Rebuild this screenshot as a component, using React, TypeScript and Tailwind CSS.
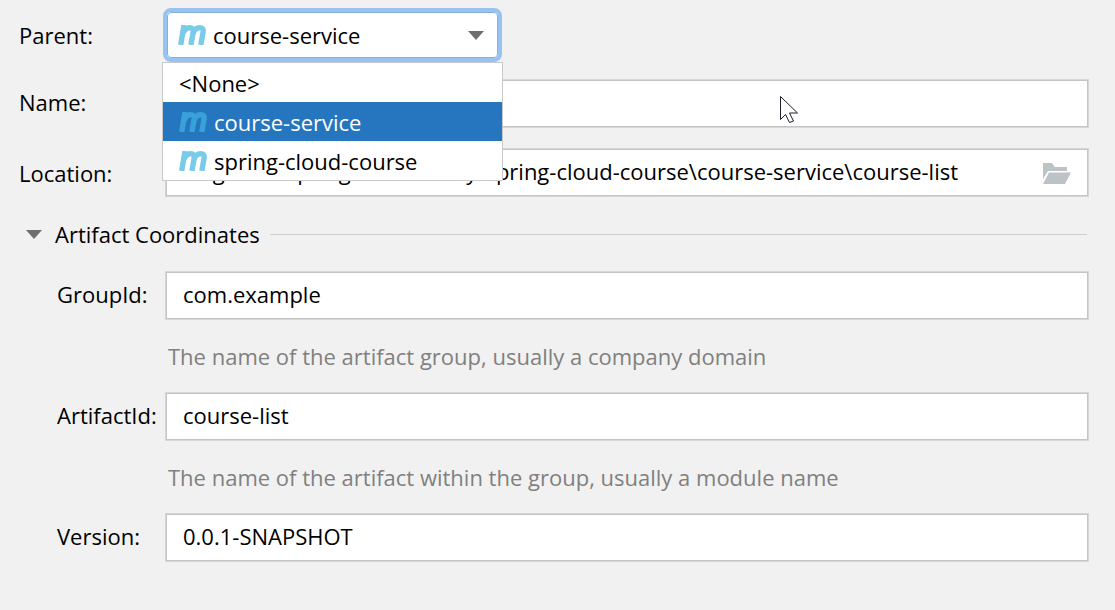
import { useState } from "react";

const modules = ["course-service", "spring-cloud-course"];

function ModuleIcon({ dim = false }: { dim?: boolean }) {
  return (
    <svg
      aria-hidden="true"
      width="28"
      height="20"
      viewBox="0 0 28 20"
      fill="none"
      className={`block shrink-0 ${dim ? "stroke-[#38a2d8]" : "stroke-[#7acbe9]"}`}
    >
      <path d="M2.700 20L6 0" strokeWidth="5.400" />
      <path d="M5 8.500C6 5 8.500 2.700 11.500 2.700C14.300 2.700 15.600 4.200 15.200 7L12.900 20" strokeWidth="5.400" />
      <path d="M15 8.500C16 5 18.500 2.700 21.500 2.700C24.500 2.700 25.600 4.200 25.100 7L22.800 20" strokeWidth="5.400" />
    </svg>
  );
}

function Arrow() {
  return (
    <svg aria-hidden="true" width="16" height="10" viewBox="0 0 16 10" className="pointer-events-none">
      <path d="M0 1h16L8 10z" fill="#6e6e6e" />
    </svg>
  );
}

function Folder() {
  return (
    <svg width="28" height="22" viewBox="0 0 28 22" fill="#bcc3c7" aria-hidden="true">
      <path d="M0 0h9l2.500 4H24v4H5L0 16z" />
      <path d="M6 9.500h22L22 21H0z" />
    </svg>
  );
}

const frame = "h-[49px] min-w-0 border border-[#d6d6d6] bg-white px-[17px] shadow-[inset_0_0_0_1px_#c4c4c4]";
const field = `${frame} w-full pb-1 text-black outline-none`;

export default function App() {
  const [parent, setParent] = useState("course-service");
  const [name, setName] = useState("");

  return (
    <form className="relative min-h-screen bg-[#f1f1f1] pt-2 pr-[26px] pb-12 pl-[19px] font-['Open_Sans',sans-serif] text-[22px] leading-[30px] text-black">
      <div className="flex h-[54px] items-center">
        <label htmlFor="parent" className="w-[144px] shrink-0">Parent:</label>
        <div className="relative w-[339px]">
          <div className="relative flex h-[54px] items-center rounded-lg border-4 border-[#97c3f3] bg-white">
            <span className="pointer-events-none absolute left-[11px]"><ModuleIcon /></span>
            <select
              id="parent"
              value={parent}
              onChange={(e) => setParent(e.target.value)}
              className="h-full w-full appearance-none rounded-sm border border-[#87afda] bg-transparent pl-[45px] outline-none"
            >
              <option value="">&lt;None&gt;</option>
              {modules.map((m) => <option key={m}>{m}</option>)}
            </select>
            <span className="pointer-events-none absolute right-3.5"><Arrow /></span>
          </div>
          <ul role="listbox" aria-label="Parent" className="absolute top-[54px] -left-px z-10 w-[341px] border border-[#c9c9c9] bg-white">
            <li role="option" aria-selected={parent === ""} className="flex h-[39px] items-center px-4">&lt;None&gt;</li>
            {modules.map((m) => (
              <li
                key={m}
                role="option"
                aria-selected={parent === m}
                onClick={() => setParent(m)}
                className={`flex h-[39px] items-center gap-[7px] px-4 ${parent === m ? "bg-[#2675bf] text-white" : ""}`}
              >
                <ModuleIcon dim={parent === m} />
                {m}
              </li>
            ))}
          </ul>
        </div>
      </div>

      <div className="mt-[17px] flex items-center">
        <label htmlFor="name" className="w-[146px] shrink-0 pb-1">Name:</label>
        <div className="relative min-w-0 flex-1">
          <input id="name" value={name} onChange={(e) => setName(e.target.value)} className={`${field} block`} />
          <svg aria-hidden="true" width="19" height="28" viewBox="0 0 19 28" className="pointer-events-none absolute top-[17px] left-[615px]">
            <path d="M.5.5v23l5-5 4 8 4-1.500-4-8h8z" fill="#fff" stroke="#1d1c2b" />
          </svg>
        </div>
      </div>

      <div className="mt-5 flex items-center">
        <label htmlFor="location" className="w-[146px] shrink-0">Location:</label>
        <div className={`${frame} flex flex-1 items-center`}>
          <input
            id="location"
            defaultValue="D:\github\spring-cloud-study\spring-cloud-course\course-service\course-list"
            className="min-w-0 flex-1 bg-transparent pb-1 outline-none"
          />
          <button type="button" aria-label="Browse" className="pt-0.5"><Folder /></button>
        </div>
      </div>

      <fieldset className="mt-[22px]">
        <legend className="contents">
          <span className="flex items-center">
            <button type="button" aria-expanded="true" className="flex items-center gap-[13px] pl-[7px]">
              <Arrow />
              Artifact Coordinates
            </button>
            <span className="mr-0.5 ml-2.5 h-px flex-1 bg-[#cecece]" />
          </span>
        </legend>
        <div className="mt-[22px] grid grid-cols-[108px_1fr] items-center pl-[38px]">
          <label htmlFor="group" className="pb-1">GroupId:</label>
          <input id="group" defaultValue="com.example" aria-describedby="group-hint" className={field} />
          <p id="group-hint" className="col-start-2 my-[21px] pl-[3px] text-[#808080]">The name of the artifact group, usually a company domain</p>
          <label htmlFor="artifact" className="pb-1">ArtifactId:</label>
          <input id="artifact" defaultValue="course-list" aria-describedby="artifact-hint" className={field} />
          <p id="artifact-hint" className="col-start-2 my-[21px] pl-[3px] text-[#808080]">The name of the artifact within the group, usually a module name</p>
          <label htmlFor="version" className="pb-1">Version:</label>
          <input id="version" defaultValue="0.0.1-SNAPSHOT" className={field} />
        </div>
      </fieldset>
    </form>
  );
}
